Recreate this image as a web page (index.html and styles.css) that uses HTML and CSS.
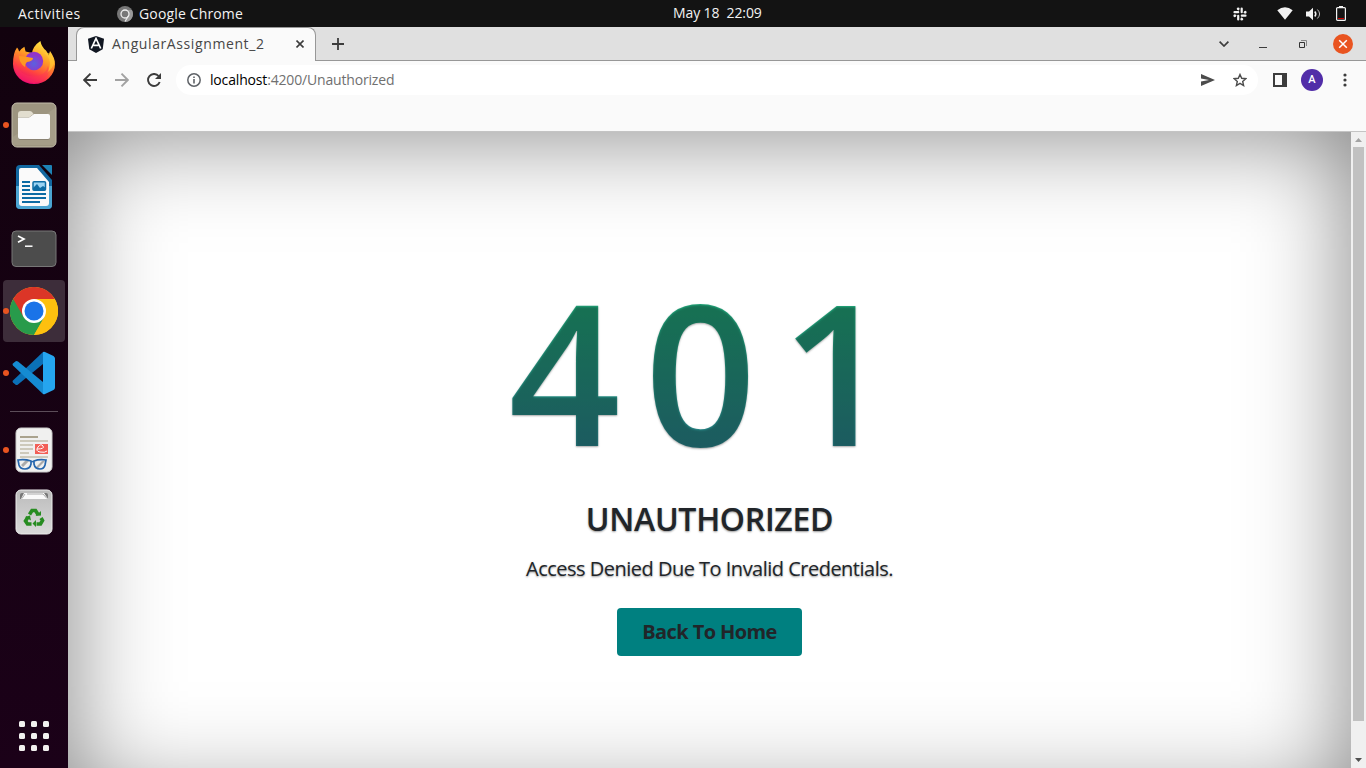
FILE: index.html
```html
<!DOCTYPE html>
<html lang="en">
<head>
<meta charset="utf-8">
<title>AngularAssignment_2</title>
<link rel="stylesheet" href="styles.css">
</head>
<body>
<header class="topbar">
  <div class="top-left">
    <span class="activities">Activities</span>
    <svg class="app-icon" width="16" height="16" viewBox="0 0 16 16"><circle cx="8" cy="8" r="8" fill="#777"/><path d="M8 4h6.900a8 8 0 0 1-6.900 12l3.500-6" fill="#999"/><circle cx="8" cy="8" r="4" fill="#777" stroke="#eee" stroke-width="1.300"/><path d="m11.600 9.500-3.600 6" stroke="#eee" stroke-width="1.200"/></svg>
    <span class="app-name">Google Chrome</span>
  </div>
  <div class="clock">May 18&nbsp; 22:09</div>
  <div class="top-right">
    <svg width="14" height="14" viewBox="0 0 14 14" fill="none" stroke="#f2f2f2" stroke-width="2.200" stroke-linecap="round"><path d="M1.500 5.200h3.700M8.700 1.500v3.700M12.500 8.700H8.800M5.200 12.500V8.800"/><path d="M5.200 1.700h.010M12.300 5.200h.010M8.700 12.300h.010M1.700 8.700h.010" stroke-width="2.600"/><path d="M4.500 1.700h.900v1M12.300 4.500v.900h-1M9.500 12.300h-.900v-1M1.700 9.500v-.900h1" stroke-width="1.500"/></svg>
    <svg class="wifi" width="16" height="13" viewBox="0 0 16 13"><path d="M.3 3.200Q8-2.800 15.700 3.200L8 12.800Z" fill="#f2f2f2"/></svg>
    <svg class="vol" width="15" height="14" viewBox="0 0 15 14" fill="none" stroke="#f2f2f2"><path d="M0 4.500h3L7 .700v12.600L3 9.500H0Z" fill="#f2f2f2" stroke="none"/><path d="M8.800 4.500q2 2.500 0 5" stroke-width="1.500"/><path d="M11.400 2.500q4.400 4.500 0 9" stroke-width="1" stroke="#bbb"/></svg>
    <svg class="batt" width="10" height="15" viewBox="0 0 10 15"><path d="M3 0h4v1.500H3z" fill="#f2f2f2"/><rect x=".6" y="1.600" width="8.800" height="12.800" rx="1" fill="none" stroke="#f2f2f2" stroke-width="1.200"/><path d="M2 12.500h6" stroke="#c00"/></svg>
  </div>
</header>
<div class="desktop">
  <nav class="dock">
    <div class="slot">
      <svg width="44" height="46" viewBox="0 0 44 46">
        <defs>
          <linearGradient id="ff" x1=".8" y1="0" x2=".35" y2="1"><stop offset="0" stop-color="#fff04a"/><stop offset=".4" stop-color="#ffa024"/><stop offset=".72" stop-color="#ff4340"/><stop offset="1" stop-color="#e60078"/></linearGradient>
          <radialGradient id="fp" cx=".5" cy=".65"><stop offset="0" stop-color="#5a62df"/><stop offset="1" stop-color="#9334c9"/></radialGradient>
        </defs>
        <path d="M5 8.500Q6.200 9.500 7.200 12.500Q9 9.800 12.400 7.800L13.600 12.500L20 14Q21 7 28.400 2Q29.500 8 34 11.500Q36 14 36.600 16.500L38 12Q43 19 43 25A21 20 0 0 1 1 25Q1 14 5 8.500Z" fill="url(#ff)"/>
        <path d="M32 14Q42 21 35 34Q41 29 42.500 23Q41 15 36.500 14Z" fill="#ffcf36" opacity=".6"/>
        <circle cx="22" cy="22" r="9.200" fill="url(#fp)"/>
        <path d="M7 17Q12 17 21 19Q21 22 15 23Q12.500 25 13 28Q7 24 7 17Z" fill="#ff9922"/>
        <path d="M3 23Q9 39 24 37Q34 36 36 27Q40 41 22 44Q6 44 3 30Z" fill="#ff315b" opacity=".4"/>
      </svg>
    </div>
    <div class="slot running">
      <svg width="46" height="46" viewBox="0 0 46 46"><rect x="1" y="1" width="44" height="44" rx="5" fill="#9d9580" stroke="#c2bca9"/><path d="M2 35 44 6v37H2Z" fill="#aaa38e" opacity=".6"/><rect x="7" y="13" width="32" height="24.800" rx="2.500" fill="#817a6b"/><path d="M7 15.500h11l5-3.500h14q2 0 2 2v21q0 2-2 2H9q-2 0-2-2Z" fill="#fafafa"/><path d="M7 12q0-3 3-3h9q2 0 3.500 3L18 15.500H7Z" fill="#e2decf"/></svg>
    </div>
    <div class="slot">
      <svg width="38" height="46" viewBox="0 0 38 46"><path d="M5 1h21l11 12v28q0 4-4 4H5q-4 0-4-4V5q0-4 4-4Z" fill="#1268a0"/><path d="M1 22h36v19q0 4-4 4H5q-4 0-4-4Z" fill="#4ba5d2"/><path d="M6 4h16l12 14v21q0 3-3 3H7q-3 0-3-3V6q0-2 2-2Z" fill="#fafafa"/><path d="M24 1h3l10 10v5Z" fill="#12020e"/><path d="M27 1h9q1 0 1 1v9Z" fill="#1d83b6"/><path d="M7 18h8M7 22h8M7 26h8M7 30h24M7 34h24M7 38h18" stroke="#0d6ca4" stroke-width="1.900"/><rect x="18" y="17.800" width="12.500" height="8.500" rx="1" fill="#9bd4f3" stroke="#0d6ca4" stroke-width="1.500"/><path d="M18 26v-2l4-4 3 4 3-2 3 2v2Z" fill="#0d6ca4"/></svg>
    </div>
    <div class="slot">
      <svg width="46" height="38" viewBox="0 0 46 38"><rect x="1" y="1" width="44" height="35.500" rx="4" fill="#4c4c4c" stroke="#777"/><path d="m7 6 6 3-6 3.300" fill="none" stroke="#fff" stroke-width="1.700"/><path d="M14 16.200h7.500" stroke="#fff" stroke-width="1.500"/></svg>
    </div>
    <div class="slot running active">
      <svg width="48" height="48" viewBox="0 0 48 48"><circle cx="24" cy="24" r="24" fill="#fdc00f"/><path d="M24 24 3.200 12A24 24 0 0 0 24 48L34.500 30Z" fill="#289b4b"/><path d="M24 12h20.800A24 24 0 0 1 24 48L34.400 30Z" fill="#fdc00f"/><path d="M3.200 12 13.600 30 24 24V12H44.800A24 24 0 0 0 3.200 12Z" fill="#db3527"/><circle cx="24" cy="24" r="12" fill="#fff"/><circle cx="24" cy="24" r="9.500" fill="#1a73e8"/></svg>
    </div>
    <div class="slot running">
      <svg width="44" height="44" viewBox="0 0 44 44"><path d="M1 29.500 31 1v12L6 33.500q-1.500 1-2.700 0L1 31.500q-1-1 0-2Z" fill="#0b70b7"/><path d="M1 14.500 31 43V31L6 10.500q-1.500-1-2.700 0L1 12.500q-1 1 0 2Z" fill="#158bd2"/><path d="M31 1q1-.5 2 0l8.500 4Q43 6 43 7.500v29q0 1.500-1.500 2.500L33 43q-1 .5-2 0Z" fill="#25a5ef"/></svg>
    </div>
    <div class="rule"></div>
    <div class="slot running">
      <svg width="38" height="46" viewBox="0 0 38 46"><rect x="1" y="1" width="36" height="44" rx="5" fill="#f0f0ef" stroke="#ccc"/><path d="M5 10h18" stroke="#aaa38e" stroke-width="2"/><path d="M5 14h28M5 18h13M5 22h13M5 26h9M5 30h28" stroke="#cdc9bb" stroke-width="1.800"/><path d="M20 17h13v10H20z" fill="#f25f56"/><path d="M22 22q8 0 6-3t-5 1 2 5 7-1" fill="none" stroke="#fff"/><path d="m6 38 5-5h4l-7 7ZM21 40l6-6h3l-7 7Z" fill="#aaa"/><path d="M3 33q7-1 13 1v3q-1 5-6 5-5 0-6-4Zm28 0q-7-1-12 1v3q1 5 6 5 4 0 5-4ZM16 35q2-1 3 0" fill="none" stroke="#2465ad" stroke-width="1.700"/></svg>
    </div>
    <div class="slot">
      <svg width="38" height="46" viewBox="0 0 38 46"><defs><linearGradient id="tr" x2="0" y2="1"><stop stop-color="#bbb"/><stop offset="1" stop-color="#dadada"/></linearGradient></defs><rect x="1" y="1" width="36" height="44" rx="5" fill="url(#tr)" stroke="#ededed"/><path d="M5 10V6q0-2 2-2h24q2 0 2 2v4Z" fill="#777"/><path d="M6 10 9 4h20l4 6Z" fill="#fafafa"/><path d="M10 5 7 9.500M12 5h16l4 4.500" fill="none" stroke="#aaa"/><g fill="none" stroke="#278c21" stroke-width="3.600"><path d="m14.500 25.500 2.500-4h3.500l2.500 4M26 29l1.500 2.500-2 3.500h-4M16.500 35h-4L10.500 32l2.500-4"/></g><path d="m20.500 27 5.500-.500v-4.500ZM21 31v7l-3.500-3.500ZM10 28l5-1.500 1 5Z" fill="#278c21"/></svg>
    </div>
    <div class="apps"><i></i><i></i><i></i><i></i><i></i><i></i><i></i><i></i><i></i></div>
  </nav>
  <main class="browser">
    <div class="tabstrip">
      <div class="tab">
        <svg width="16" height="17" viewBox="0 0 16 17"><path d="M8 0l8 2.700-1.300 10.600L8 17l-6.700-3.700L0 2.700Z" fill="#111722"/><path d="m3.300 12.500 4.700-10 4.700 10M5.500 9.300h5" fill="none" stroke="#fff" stroke-width="1.700"/></svg>
        <span class="tab-title">AngularAssignment_2</span>
        <svg width="8" height="8" viewBox="0 0 8 8"><path d="m.5.500 7 7m0-7-7 7" stroke="#3c3c3c" stroke-width="1.600"/></svg>
      </div>
      <svg class="plus" width="12" height="12" viewBox="0 0 12 12"><path d="M6 0v12M0 6h12" stroke="#3c3c3c" stroke-width="1.800"/></svg>
      <div class="win-controls">
        <svg width="10" height="6" viewBox="0 0 10 6"><path d="m.6.600 4.400 4.400L9.400.600" fill="none" stroke="#3c3c3c" stroke-width="1.700"/></svg>
        <svg class="min" width="8" height="6" viewBox="0 0 8 6"><path d="M0 4.500h8" stroke="#3c3c3c"/></svg>
        <svg class="max" width="8" height="8" viewBox="0 0 8 8"><path d="M2 .500h5.500V6" fill="none" stroke="#888"/><path d="M.5 2.500h5v5h-5Z" fill="none" stroke="#333"/></svg>
        <svg class="close" width="20" height="20" viewBox="0 0 20 20"><circle cx="10" cy="10" r="10" fill="#e95420"/><path d="m6.200 6.200 7.600 7.600m0-7.600-7.600 7.600" stroke="#fff" stroke-width="1.500"/></svg>
      </div>
    </div>
    <div class="toolbar">
      <svg class="back" width="14" height="14" viewBox="0 0 14 14" fill="none" stroke="#3c3c3c" stroke-width="1.900"><path d="M14 7H1.500M7.500.700 1.200 7l6.300 6.300"/></svg>
      <svg class="fwd" width="14" height="14" viewBox="0 0 14 14" fill="none" stroke="#a2a2a2" stroke-width="1.900"><path d="M0 7h12.500M6.500.700 12.800 7l-6.300 6.300"/></svg>
      <svg class="reload" width="14" height="14" viewBox="0 0 14 14"><path d="M11.600 3A6 6 0 1 0 12.700 9" fill="none" stroke="#3c3c3c" stroke-width="1.900"/><path d="M14 0v6H8Z" fill="#3c3c3c"/></svg>
      <div class="address">
        <svg width="14" height="14" viewBox="0 0 14 14"><circle cx="7" cy="7" r="6.200" fill="none" stroke="#5f6368" stroke-width="1.500"/><path d="M7 6v4.500M7 3.400V5" stroke="#5f6368" stroke-width="1.600"/></svg>
        <span class="url"><b>localhost</b>:4200/Unauthorized</span>
        <svg class="send" width="14" height="12" viewBox="0 0 14 12"><path d="M0 0l14 6L0 12V7.500L8 6 0 4.500Z" fill="#4c4c4c"/></svg>
        <svg class="star" width="14" height="14" viewBox="0 0 14 14"><path d="m7 1.500 1.700 3.800 4.100.400-3.100 2.700.900 4.100L7 10.400l-3.600 2.100.900-4.100-3.100-2.700 4.100-.400Z" fill="none" stroke="#4c4c4c" stroke-width="1.400"/></svg>
      </div>
      <svg class="panel" width="14" height="14" viewBox="0 0 14 14"><path d="M1 1h12v12H1Z" fill="none" stroke="#3c3c3c" stroke-width="2"/><path d="M9 0h5v14H9Z" fill="#3c3c3c"/></svg>
      <span class="avatar">A</span>
      <svg class="kebab" width="4" height="14" viewBox="0 0 4 14" fill="#3c3c3c"><circle cx="2" cy="2" r="1.600"/><circle cx="2" cy="7" r="1.600"/><circle cx="2" cy="12" r="1.600"/></svg>
    </div>
    <div class="bookmarks"></div>
    <div class="viewport">
      <section class="page">
        <h1>401</h1>
        <h2>UNAUTHORIZED</h2>
        <p>Access Denied Due To Invalid Credentials.</p>
        <button class="home">Back To Home</button>
      </section>
      <div class="scrollbar">
        <svg width="15" height="15" viewBox="0 0 15 15"><path d="M4 10h7L7.500 6Z" fill="#a3a3a3"/></svg>
        <div class="thumb"></div>
        <svg width="15" height="15" viewBox="0 0 15 15"><path d="M4 5h7L7.500 9Z" fill="#505050"/></svg>
      </div>
    </div>
  </main>
</div>
</body>
</html>
```
FILE: styles.css
```css
* { box-sizing: border-box; }
body { margin: 0; width: 1366px; height: 768px; overflow: hidden; font-family: "Open Sans", "Noto Sans", sans-serif; background: #fff; }
svg { display: block; flex: none; }
.topbar { height: 27px; background: #131313; color: #f2f2f2; display: grid; grid-template-columns: 604px 158px 1fr; align-items: center; font-size: 14px; white-space: nowrap; }
.activities, .app-name, .clock { line-height: 24px; }
.top-left { display: flex; align-items: center; padding-left: 18px; }
.activities { width: 99px; letter-spacing: .5px; }
.app-name { margin-left: 6px; letter-spacing: .15px; }
.clock { margin-left: 69px; letter-spacing: -.1px; padding-bottom: 1px; }
.top-right { display: flex; align-items: center; justify-content: flex-end; padding-right: 20px; }
.wifi { margin-left: 30px; }
.vol { margin-left: 13px; }
.batt { margin-left: 15px; }

.desktop { display: flex; height: 741px; }
.dock { width: 68px; flex: none; background: linear-gradient(#12020e, #1b0118); display: flex; flex-direction: column; align-items: center; padding-top: 5px; }
.slot { position: relative; width: 62px; height: 62px; display: flex; align-items: center; justify-content: center; flex: none; }
.slot.active { background: #3d2d3a; border-radius: 4px; }
.slot.running::before { content: ""; position: absolute; left: 0; top: 28px; width: 6px; height: 6px; border-radius: 50%; background: #e95420; }
.slot:first-child svg { margin-bottom: 2px; }
.rule { width: 48px; height: 1px; background: #5c4d59; margin: 7px 0; flex: none; }
.apps { margin-top: auto; margin-bottom: 17px; display: grid; grid-template-columns: repeat(3, 6px); gap: 6px; }
.apps i { height: 6px; border-radius: 1.500px; background: #f2f0ef; }

.browser { flex: 1; display: flex; flex-direction: column; background: #fafafa; }
.tabstrip { height: 34px; background: #e0e0e0; border-bottom: 1px solid #979797; display: flex; align-items: flex-start; padding-left: 8px; }
.tab { width: 240px; height: 34px; background: #fafafa; border: 1px solid #979797; border-bottom: 0; border-radius: 8px 8px 0 0; display: flex; align-items: center; padding: 0 11px 1px; color: #474747; font-size: 14px; }
.tab-title { flex: 1; margin-left: 8px; letter-spacing: .6px; padding-bottom: 1px; }
.plus { margin: 11px 0 0 16px; }
.win-controls { margin-left: auto; display: flex; align-items: center; height: 34px; padding-right: 13px; }
.min { margin: 4px 0 0 30px; }
.max { margin-left: 32px; }
.close { margin-left: 26px; }
.toolbar { height: 38px; display: flex; align-items: center; padding-left: 15px; }
.fwd, .reload { margin-left: 18px; }
.address { width: 1082px; height: 30px; margin-left: 15px; border-radius: 15px; background: #fff; display: flex; align-items: center; padding: 0 11px; font-size: 14px; color: #707070; }
.url { flex: 1; margin-left: 9px; letter-spacing: -.17px; padding-bottom: 2px; }
.url b { font-weight: 400; color: #000; }
.star { margin-left: 18px; }
.panel { margin-left: 15px; }
.avatar { width: 22px; height: 22px; border-radius: 50%; background: #512da8; color: #fff; margin-left: 14px; font: 500 11px/22px Roboto, sans-serif; text-align: center; }
.kebab { margin-left: 20px; }
.bookmarks { height: 33px; border-bottom: 1px solid #c4c4c4; }

.viewport { height: 636px; display: flex; overflow: hidden; }
.page { width: 1283px; height: 670px; flex: none; background: #fff; box-shadow: inset 0 0 100px rgba(0, 0, 0, .5); display: flex; flex-direction: column; align-items: center; color: #212529; text-shadow: 0 1px 2px rgba(0, 0, 0, .4); }
h1 { margin: 143px 0 34px; font-size: 196px; line-height: 190px; height: 190px; font-weight: 650; letter-spacing: 24px; padding-left: 6px; background: linear-gradient(#22ae7d 12%, #2b8b92 90%); -webkit-background-clip: text; background-clip: text; color: transparent; text-shadow: 0 1px 2px rgba(0, 0, 0, .34); }
h2 { margin: 0; font-size: 32px; line-height: 40px; font-weight: 600; height: 40px; letter-spacing: -.3px; }
p { margin: 15px 0 0; font-size: 20px; line-height: 30px; letter-spacing: -.51px; }
.home { margin-top: 24px; width: 185px; height: 48px; border: 0; border-radius: 4px; background: teal; color: #212529; font: 700 20px "Open Sans", sans-serif; letter-spacing: -.6px; padding: 0 0 2px; white-space: nowrap; }
.scrollbar { width: 15px; background: #f0f0f0; flex: none; height: 636px; }
.thumb { width: 11px; height: 574px; margin: 0 2px 32px; background: #c1c1c1; }
```
